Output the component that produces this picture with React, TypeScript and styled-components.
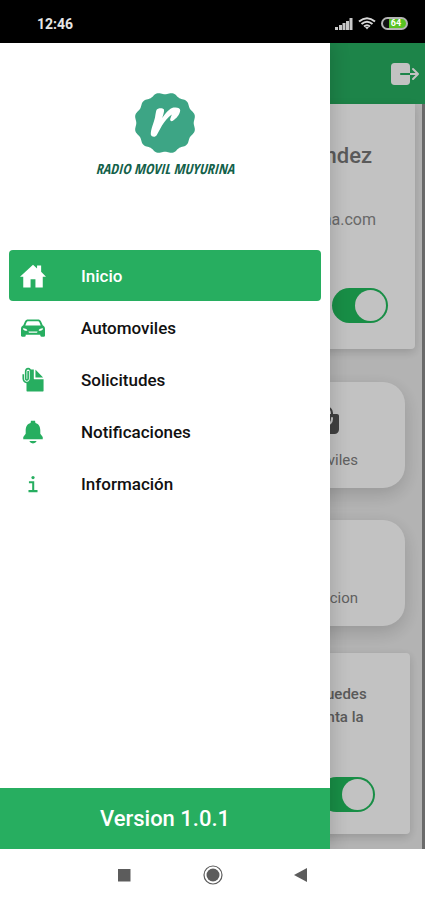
import React, { useState } from "react";
import styled, { createGlobalStyle } from "styled-components";
import {
  IoHomeSharp,
  IoDocumentAttachSharp,
  IoNotificationsSharp,
  IoInformationSharp,
  IoExit,
  IoBagHandle,
} from "react-icons/io5";

const GREEN = "#27ae60";

const GlobalStyle = createGlobalStyle`
  * { box-sizing: border-box; }
  body { margin: 0; font-family: Roboto, sans-serif; background: #fff; }
  button { font: inherit; border: 0; background: none; padding: 0; cursor: pointer; }
  h1, h2, p { margin: 0; font-weight: 400; }
`;

const Screen = styled.div`
  display: flex;
  flex-direction: column;
  min-height: 100vh;
  overflow: hidden;
`;

const StatusBar = styled.header`
  display: flex;
  align-items: center;
  justify-content: space-between;
  height: 43px;
  padding: 4px 17px 0 37px;
  background: #000;
  color: #e6e6e6;
  font-size: 14px;
  font-weight: 700;
`;

const StatusIcons = styled.div`
  display: flex;
  align-items: center;
  gap: 5px;
  svg { display: block; }
`;

const Stage = styled.div`
  position: relative;
  flex: 1;
  display: flex;
`;

const Page = styled.main`
  flex: 1;
  display: flex;
  flex-direction: column;
  background: #ececec;
`;

const Toolbar = styled.div`
  display: flex;
  align-items: center;
  justify-content: flex-end;
  height: 61px;
  padding-right: 4px;
  background: ${GREEN};
  color: #fff;
  button { display: flex; color: inherit; }
`;

const Content = styled.div`
  flex: 1;
  display: flex;
  flex-direction: column;
  padding: 0 7px 14px 10px;
  border-right: 3px solid #8c8c8c;
`;

const Card = styled.section<{ $profile?: boolean }>`
  display: flex;
  flex-direction: column;
  align-items: flex-end;
  margin-right: ${(p) => (p.$profile ? 0 : 5)}px;
  padding: ${(p) => (p.$profile ? "38px 27px 26px" : "30px 35px 22px")};
  border-radius: ${(p) => (p.$profile ? "0 0 4px 4px" : "4px")};
  background: #fff;
  box-shadow: 0 3px 10px rgba(0, 0, 0, 0.16);
`;

const Name = styled.h2`
  margin-right: 16px;
  font-size: 22px;
  line-height: 28px;
  font-weight: 500;
  color: #777;
`;

const Email = styled.p`
  margin: 38px 12px 56px 0;
  font-size: 16px;
  line-height: 24px;
  color: #8a8a8a;
`;

const Note = styled.p`
  width: 82px;
  margin: 0 4px 48px 0;
  font-size: 15px;
  line-height: 23px;
  font-weight: 500;
  color: #777;
`;

const Tiles = styled.div`
  display: flex;
  flex-direction: column;
  gap: 32px;
  margin: 33px 10px 27px 0;
`;

const Tile = styled.button`
  display: flex;
  flex-direction: column;
  align-items: flex-end;
  justify-content: flex-end;
  gap: 13px;
  height: 106px;
  padding: 0 47px 17px;
  border-radius: 22px;
  background: #fff;
  box-shadow: 0 6px 18px rgba(0, 0, 0, 0.16);
  color: #808080;
  font-size: 15px;
  line-height: 22px;
  svg { margin-right: 16px; color: #555; }
`;

const Switch = styled.input`
  appearance: none;
  display: flex;
  align-items: center;
  width: 56px;
  height: 35px;
  margin: 0;
  padding: 2px;
  border-radius: 18px;
  background: #aaa;
  cursor: pointer;
  &::before {
    content: "";
    width: 31px;
    height: 31px;
    border-radius: 50%;
    background: #fff;
  }
  &:checked { justify-content: flex-end; background: #20bb5c; }
`;

const Backdrop = styled.div`
  position: absolute;
  inset: 0;
  background: rgba(0, 0, 0, 0.24);
`;

const Drawer = styled.aside`
  position: absolute;
  inset: 0 auto 0 0;
  display: flex;
  flex-direction: column;
  width: 330px;
  max-width: 85%;
  background: #fff;
  box-shadow: 4px 0 16px rgba(0, 0, 0, 0.14);
  clip-path: inset(0 -24px 0 0);
`;

const Brand = styled.div`
  display: flex;
  flex-direction: column;
  align-items: center;
  gap: 5px;
  height: 207px;
  padding-top: 50px;
`;

const BrandName = styled.h1`
  font-family: "Liberation Sans Narrow", "Open Sans Condensed", Roboto, sans-serif;
  font-size: 14px;
  line-height: 22px;
  font-weight: 900;
  font-style: italic;
  color: #14614a;
`;

const Menu = styled.nav`
  display: flex;
  flex-direction: column;
  gap: 1px;
  flex: 1;
  padding: 0 9px;
`;

const MenuItem = styled.a<{ $active?: boolean }>`
  display: flex;
  align-items: center;
  gap: 35px;
  height: 51px;
  padding: 0 11px;
  border-radius: 4px;
  background: ${(p) => (p.$active ? GREEN : "transparent")};
  color: ${(p) => (p.$active ? "#fff" : "#111")};
  font-size: 17px;
  font-weight: 500;
  text-decoration: none;
  svg { color: ${(p) => (p.$active ? "#fff" : GREEN)}; }
`;

const Version = styled.footer`
  display: flex;
  align-items: center;
  justify-content: center;
  height: 61px;
  background: ${GREEN};
  color: #fff;
  font-size: 22px;
  font-weight: 500;
`;

const SystemNav = styled.footer`
  display: flex;
  align-items: center;
  justify-content: center;
  gap: 65px;
  height: 51px;
  button { display: flex; }
`;

function Car({ size }: { size: number }) {
  return (
    <svg width={size} height={size} viewBox="0 0 26 26" aria-hidden="true">
      <path
        fill="currentColor"
        fillRule="evenodd"
        d="M8.500 4.500h9c2 0 3 .6 3.700 2.200l1.500 3.600c1.600.9 2.300 2 2.300 3.700v6.500c0 .8-.4 1.200-1.200 1.200h-2.300c-.8 0-1.200-.4-1.200-1.200v-.8H5.700v.8c0 .8-.4 1.200-1.200 1.200H2.200c-.8 0-1.200-.4-1.200-1.200V14c0-1.700.7-2.800 2.300-3.700l1.500-3.600C5.500 5.100 6.500 4.500 8.500 4.500zM8.600 6.200c-1.200 0-1.700.3-2.100 1.300l-1.200 2.900h15.400l-1.200-2.900c-.4-1-.9-1.300-2.100-1.300zM2.900 13.200c.2 2 1.500 2.600 4.400 2.600 0-1.600-1.500-2.600-4.400-2.600zM23.100 13.200c-2.900 0-4.400 1-4.400 2.600 2.900 0 4.200-.6 4.400-2.600zM8.500 16.500c0 .9.400 1.200 1.300 1.200h6.400c.9 0 1.300-.3 1.300-1.200z"
      />
    </svg>
  );
}

const items = [
  { label: "Inicio", Icon: IoHomeSharp },
  { label: "Automoviles", Icon: Car },
  { label: "Solicitudes", Icon: IoDocumentAttachSharp },
  { label: "Notificaciones", Icon: IoNotificationsSharp },
  { label: "Información", Icon: IoInformationSharp },
];

const LOBES = 12;
const badgePath = (() => {
  const steps = 180;
  const points: string[] = [];
  for (let i = 0; i < steps; i++) {
    const a = (i / steps) * Math.PI * 2;
    const r = 29.7 - Math.cos(LOBES * a);
    points.push(`${(31 + r * Math.cos(a)).toFixed(2)} ${(30 + r * Math.sin(a)).toFixed(2)}`);
  }
  return `M${points.join("L")}Z`;
})();

function Logo() {
  return (
    <svg width="62" height="60" viewBox="0 0 62 60" aria-hidden="true">
      <path d={badgePath} fill="#3da585" />
      <path
        fill="#fff"
        d="M22.500 17C23.500 15 28.500 14.500 30 16.500C30.300 19 29.200 22 28.200 25C31.500 20.500 35.500 15.500 39.500 14.600C43 14 46.500 15 46.200 17.500C45.800 21.500 42.500 25.500 38.500 28C37 28.500 35.800 27.500 36.200 26L37.800 21.500C34 24 30.500 28.500 28 32.500L22.800 42C21.500 44.500 17.500 44.300 16.800 41.500C16.500 37 20 29 21 24.500C21.500 21.500 21.800 19 22.500 17Z"
      />
    </svg>
  );
}

function Signal() {
  return (
    <svg width="18" height="12" viewBox="0 0 18 12" fill="#c8c8c8" aria-hidden="true">
      <path d="M0 9h3v3H0zM4 7h3v5H4zM7.500 5h3v7h-3zM11 3h3v9h-3zM14.500 0h3v12h-3z" />
    </svg>
  );
}

function Wifi() {
  return (
    <svg width="18" height="13" viewBox="0 0 18 13" fill="none" stroke="#d8d8d8" strokeWidth="2" aria-hidden="true">
      <path d="M1 4.500Q9-2 17 4.500M3.500 7Q9 2.500 14.500 7M6 9.500Q9 7 12 9.500" />
      <path d="M7 10h4l-2 2.500z" fill="#d8d8d8" stroke="none" />
    </svg>
  );
}

const BatteryBox = styled.span`
  display: flex;
  align-items: center;
  justify-content: center;
  width: 27px;
  height: 13px;
  padding-left: 3px;
  border: 2px solid #b4b4b4;
  border-radius: 7px;
  background: linear-gradient(90deg, #111 25%, #58c322 25%);
  color: #fff;
  font-size: 9px;
  line-height: 9px;
`;

export default function App() {
  const [active, setActive] = useState("Inicio");
  return (
    <>
      <GlobalStyle />
      <Screen>
        <StatusBar>
          <span>12:46</span>
          <StatusIcons>
            <Signal />
            <Wifi />
            <BatteryBox>64</BatteryBox>
          </StatusIcons>
        </StatusBar>
        <Stage>
          <Page>
            <Toolbar>
              <button aria-label="Salir"><IoExit size={32} /></button>
            </Toolbar>
            <Content>
              <Card $profile>
                <Name>Fernandez</Name>
                <Email>muyurina.com</Email>
                <Switch type="checkbox" role="switch" aria-label="Disponible" defaultChecked />
              </Card>
              <Tiles>
                <Tile><IoBagHandle size={32} />Automoviles</Tile>
                <Tile>Informacion</Tile>
              </Tiles>
              <Card>
                <Note>que puedes aumenta la</Note>
                <Switch type="checkbox" role="switch" aria-label="Cuenta" defaultChecked />
              </Card>
            </Content>
          </Page>
          <Backdrop />
          <Drawer>
            <Brand>
              <Logo />
              <BrandName>RADIO MOVIL MUYURINA</BrandName>
            </Brand>
            <Menu>
              {items.map(({ label, Icon }) => (
                <MenuItem key={label} href="#" $active={active === label} onClick={() => setActive(label)}>
                  <Icon size={26} />
                  {label}
                </MenuItem>
              ))}
            </Menu>
            <Version>Version 1.0.1</Version>
          </Drawer>
        </Stage>
        <SystemNav>
          <button aria-label="Recientes">
            <svg width="24" height="24" viewBox="0 0 24 24"><path d="M6 6h12.500v12.500H6z" fill="#5c5c5c" /></svg>
          </button>
          <button aria-label="Inicio del sistema">
            <svg width="24" height="24" viewBox="0 0 24 24">
              <circle cx="12" cy="12" r="9" fill="none" stroke="#5c5c5c" strokeWidth="1.200" />
              <circle cx="12" cy="12" r="6.500" fill="#5c5c5c" />
            </svg>
          </button>
          <button aria-label="Atrás">
            <svg width="24" height="24" viewBox="0 0 24 24"><path d="M4 12 17 5v14z" fill="#5c5c5c" /></svg>
          </button>
        </SystemNav>
      </Screen>
    </>
  );
}
